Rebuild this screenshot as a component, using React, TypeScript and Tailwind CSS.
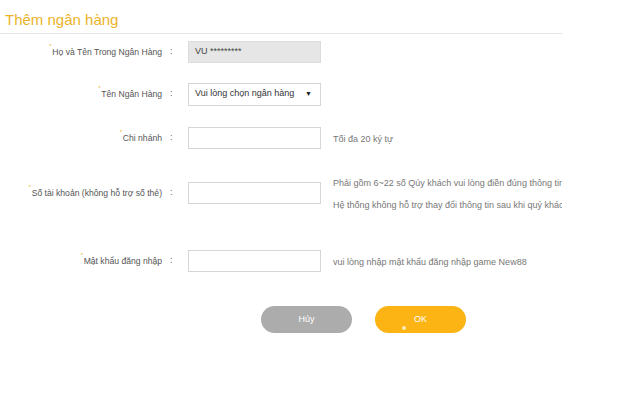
import * as React from "react";

interface FieldRow {
    label: string;
    top: string;
    kind: "readonly" | "select" | "input";
    value?: string;
    hints?: string[];
}

const rows: FieldRow[] = [
    { label: "Họ và Tên Trong Ngân Hàng", top: "mt-[7px]", kind: "readonly", value: "VU *********" },
    { label: "Tên Ngân Hàng", top: "mt-[20px]", kind: "select", value: "Vui lòng chọn ngân hàng" },
    { label: "Chi nhánh", top: "mt-[22px]", kind: "input", hints: ["Tối đa 20 ký tự"] },
    {
        label: "Số tài khoản (không hỗ trợ số thẻ)",
        top: "mt-[33px]",
        kind: "input",
        hints: [
            "Phải gồm 6~22 số Qúy khách vui lòng điền đúng thông tin ngân hàng",
            "Hệ thống không hỗ trợ thay đổi thông tin sau khi quý khách xác nhận",
        ],
    },
    { label: "Mật khẩu đăng nhập", top: "mt-[46px]", kind: "input", hints: ["vui lòng nhập mật khẩu đăng nhập game New88"] },
];

function Row({ row }: { row: FieldRow }) {
    return (
        <div className={`${row.top} flex items-center h-[22px]`}>
            <div className="w-[162px] shrink-0 text-right text-[8.6px] text-[#555]">
                <span className="relative">
                    <span className="absolute -left-[3px] -top-[5px] text-[6px] text-[#f0b41e]">*</span>
                    {row.label}
                </span>
            </div>
            <div className="w-[26px] shrink-0 pl-[8px] text-[9px] text-[#666]">:</div>
            {row.kind === "readonly" && (
                <div className="w-[133px] h-[22px] shrink-0 bg-[#e6e6e6] border border-[#dcdcdc] flex items-center px-[6px] text-[9px] text-[#444]">
                    {row.value}
                </div>
            )}
            {row.kind === "select" && (
                <div className="w-[133px] h-[23px] shrink-0 bg-white border border-[#d6d6d6] flex items-center justify-between px-[6px] text-[9px] text-[#333]">
                    <span>{row.value}</span>
                    <span className="text-[7px] text-[#222] pr-[2px]">▼</span>
                </div>
            )}
            {row.kind === "input" && (
                <div className="w-[133px] h-[22px] shrink-0 bg-white border border-[#d6d6d6]" />
            )}
            {row.hints && (
                <div className="ml-[12px] mt-[3px] flex flex-col gap-[11px] whitespace-nowrap text-[9px] leading-[11px] text-[#777]">
                    {row.hints.map((h) => (
                        <span key={h}>{h}</span>
                    ))}
                </div>
            )}
        </div>
    );
}

export default function App() {
    return (
        <div className="w-[640px] h-[400px] bg-white font-['Liberation_Sans',Arial,sans-serif]">
            <div className="w-[562px] overflow-hidden">
                <div className="h-[34px] border-b border-[#e4e4e4] pl-[5px] pt-[11px] text-[15px] leading-[18px] text-[#ebb32a]">
                    Thêm ngân hàng
                </div>
                {rows.map((r) => (
                    <Row key={r.label} row={r} />
                ))}
                <div className="mt-[34px] flex gap-[23px] pl-[261px]">
                    <button className="w-[91px] h-[27px] rounded-full bg-[#acacac] text-white text-[9px]">Hủy</button>
                    <button className="relative w-[91px] h-[27px] rounded-full bg-[#fbb414] text-white text-[9px]">
                        OK
                        <span className="absolute left-[27px] top-[20px] w-[4px] h-[4px] rounded-full bg-[#fde8b0]" />
                    </button>
                </div>
            </div>
        </div>
    );
}
